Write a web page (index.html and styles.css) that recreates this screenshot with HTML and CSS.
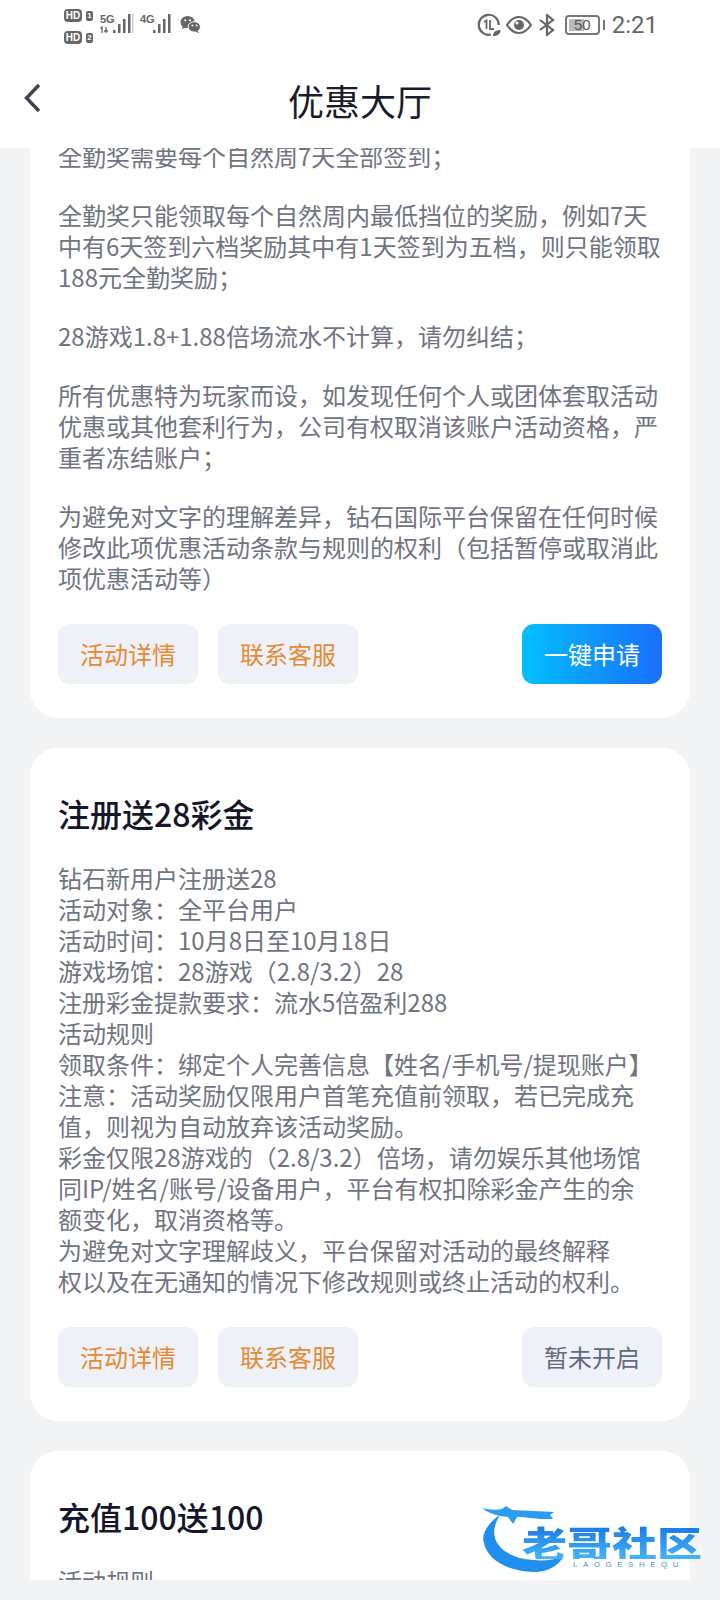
FILE: index.html
```html
<!DOCTYPE html>
<html lang="zh-CN">

<head>
    <meta charset="UTF-8">
    <meta name="viewport" content="width=device-width, initial-scale=1.0">
    <title>优惠大厅</title>
    <link rel="stylesheet" href="styles.css">
</head>

<body>
    <div id="page-wrap">
        <div class="top-bar">
            <div class="status-bar">
                <div class="status-left">
                    <div class="sim-col">
                        <div class="sim-row"><span class="hd">HD</span><span class="sim-num">1</span></div>
                        <div class="sim-row"><span class="hd">HD</span><span class="sim-num">2</span></div>
                    </div>
                    <div class="net net-5g">
                        <span class="net-label">5G</span>
                        <svg width="34" height="24" viewBox="0 0 34 24">
                            <path d="M2 23v-6L0.500 18.500M6 17v6M4 21h4" stroke="#666" stroke-width="1.300" fill="none" />
                            <rect x="13" y="20" width="2.500" height="3" fill="#666" />
                            <rect x="18" y="14" width="2.500" height="9" fill="#666" />
                            <rect x="23" y="9" width="2.500" height="14" fill="#666" />
                            <rect x="28" y="4" width="2.500" height="19" fill="#666" />
                            <rect x="32" y="4" width="1.500" height="19" fill="#ccc" />
                        </svg>
                    </div>
                    <div class="net net-4g">
                        <span class="net-label">4G</span>
                        <svg width="24" height="24" viewBox="0 0 24 24">
                            <rect x="1" y="20" width="2.500" height="3" fill="#666" />
                            <rect x="6" y="14" width="2.500" height="9" fill="#666" />
                            <rect x="11" y="9" width="2.500" height="14" fill="#666" />
                            <rect x="16" y="4" width="2.500" height="19" fill="#666" />
                        </svg>
                    </div>
                    <svg class="wechat" width="21" height="19" viewBox="0 0 22 20">
                        <ellipse cx="8" cy="7.500" rx="7.500" ry="6.500" fill="#666" />
                        <path d="M3 11l-1 4 4-2z" fill="#666" />
                        <ellipse cx="15" cy="12.500" rx="6.500" ry="5.500" fill="#666" stroke="#fff" stroke-width="1" />
                        <path d="M18 16l2 3-4-1.500z" fill="#666" />
                        <circle cx="5.500" cy="5.500" r="1.100" fill="#fff" />
                        <circle cx="10.500" cy="5.500" r="1.100" fill="#fff" />
                        <circle cx="13" cy="11" r="1" fill="#fff" />
                        <circle cx="17.500" cy="11" r="1" fill="#fff" />
                    </svg>
                </div>
                <div class="status-right">
                    <svg class="data-saver" width="24" height="24" viewBox="0 0 24 24">
                        <path d="M14 21.500A10 10 0 1 1 21.700 12" fill="none" stroke="#666" stroke-width="2.200" />
                        <path d="M7 9l2.500-1.500V16M13 7v9h4" fill="none" stroke="#666" stroke-width="1.800" />
                        <path d="M16 23c0-4 3-6 7.500-6 0 4-3 6-7.500 6z" fill="#666" />
                    </svg>
                    <svg width="26" height="20" viewBox="0 0 26 20">
                        <path d="M1 10C5 4 9 2 13 2s8 2 12 8c-4 6-8 8-12 8s-8-2-12-8z" fill="none" stroke="#666" stroke-width="2.200" />
                        <circle cx="13" cy="10" r="5" fill="#666" />
                        <circle cx="11" cy="8" r="1.500" fill="#fff" />
                    </svg>
                    <svg width="16" height="22" viewBox="0 0 16 22">
                        <path d="M1 6l13 10-6 5V1l6 5L1 16" fill="none" stroke="#666" stroke-width="2.200" />
                    </svg>
                    <div class="battery">
                        <div class="battery-box"><span class="battery-fill"></span><span class="battery-num">50</span></div>
                        <span class="battery-tip"></span>
                    </div>
                    <span class="clock">2:21</span>
                </div>
            </div>
            <div class="nav-bar">
                <svg class="back" width="20" height="30" viewBox="0 0 20 30">
                    <path d="M16 2L3.500 15 16 28" fill="none" stroke="#3f4350" stroke-width="3.400" />
                </svg>
                <h1 class="nav-title">优惠大厅</h1>
            </div>
        </div>

        <div class="list">
            <div class="card card-first">
                <div class="rules">
                    <p>全勤奖需要每个自然周7天全部签到；</p>
                    <p>全勤奖只能领取每个自然周内最低挡位的奖励，例如7天<br>中有6天签到六档奖励其中有1天签到为五档，则只能领取<br>188元全勤奖励；</p>
                    <p>28游戏1.8+1.88倍场流水不计算，请勿纠结；</p>
                    <p>所有优惠特为玩家而设，如发现任何个人或团体套取活动<br>优惠或其他套利行为，公司有权取消该账户活动资格，严<br>重者冻结账户；</p>
                    <p>为避免对文字的理解差异，钻石国际平台保留在任何时候<br>修改此项优惠活动条款与规则的权利（包括暂停或取消此<br>项优惠活动等）</p>
                </div>
                <div class="actions">
                    <a class="btn btn-plain">活动详情</a>
                    <a class="btn btn-plain">联系客服</a>
                    <a class="btn btn-apply">一键申请</a>
                </div>
            </div>

            <div class="card">
                <h2 class="card-title">注册送28彩金</h2>
                <div class="rules">
                    钻石新用户注册送28<br>
                    活动对象：全平台用户<br>
                    活动时间：10月8日至10月18日<br>
                    游戏场馆：28游戏（2.8/3.2）28<br>
                    注册彩金提款要求：流水5倍盈利288<br>
                    活动规则<br>
                    领取条件：绑定个人完善信息【姓名/手机号/提现账户】<br>
                    注意：活动奖励仅限用户首笔充值前领取，若已完成充<br>
                    值，则视为自动放弃该活动奖励。<br>
                    彩金仅限28游戏的（2.8/3.2）倍场，请勿娱乐其他场馆<br>
                    同IP/姓名/账号/设备用户，平台有权扣除彩金产生的余<br>
                    额变化，取消资格等。<br>
                    为避免对文字理解歧义，平台保留对活动的最终解释<br>
                    权以及在无通知的情况下修改规则或终止活动的权利。
                </div>
                <div class="actions">
                    <a class="btn btn-plain">活动详情</a>
                    <a class="btn btn-plain">联系客服</a>
                    <a class="btn btn-closed">暂未开启</a>
                </div>
            </div>

            <div class="card">
                <h2 class="card-title">充值100送100</h2>
                <div class="rules">活动规则</div>
            </div>
        </div>

        <div class="bottom-strip"></div>

        <div class="watermark">
            <svg class="watermark-dragon" width="100" height="72" viewBox="0 0 100 72">
                <path d="M18 12C6 20 0 30 1.500 38c3 18 22 30 50 31 14 0 24-6 30-15-10 3-20 4-30 3-16-1-28-6-35-15-6-8-6-18 1.500-30z" fill="#1f8eee" />
                <path d="M0 5c7 2 14 2 20 1l4-3 6 4c14 1 28 1 42 2l-4 3 3 4c-9 0-16 0-23-1-5-1-9-1-13-1l-4 7-5-7C15 13 6 10 0 5z" fill="#2b9bf4" />
            </svg>
            <div class="watermark-name">老哥社区</div>
            <div class="watermark-sub">LAOGESHEQU</div>
        </div>
    </div>
</body>

</html>
```

FILE: styles.css
```css
* {
    box-sizing: border-box;
}

html,
body {
    margin: 0;
    padding: 0;
}

body {
    background-color: #F2F3F5;
    font-family: "Noto Sans CJK SC", "Noto Sans", sans-serif;
}

#page-wrap {
    position: relative;
    width: 720px;
    height: 1600px;
    display: flex;
    flex-direction: column;
    overflow: hidden;
}

.top-bar {
    height: 148px;
    flex-shrink: 0;
    background-color: #fff;
    position: relative;
    z-index: 1;
}

.status-bar {
    height: 52px;
    display: flex;
    justify-content: space-between;
    padding: 6px 62px 0 64px;
}

.status-left {
    display: flex;
    align-items: flex-start;
}

.sim-col {
    display: flex;
    flex-direction: column;
    gap: 9px;
    margin-top: 3px;
}

.sim-row {
    display: flex;
    align-items: center;
    gap: 4px;
    height: 13px;
}

.hd {
    width: 18px;
    height: 13px;
    border-radius: 4px;
    background-color: #666;
    color: #fff;
    font-family: "Liberation Sans", sans-serif;
    font-size: 10px;
    font-weight: 700;
    line-height: 13px;
    text-align: center;
}

.sim-num {
    width: 7px;
    height: 10px;
    border-radius: 2px;
    background-color: #666;
    color: #fff;
    font-family: "Liberation Sans", sans-serif;
    font-size: 8px;
    font-weight: 700;
    line-height: 10px;
    text-align: center;
}

.net {
    position: relative;
    margin-left: 7px;
    margin-top: 4px;
}

.net-label {
    position: absolute;
    left: 0;
    top: 4px;
    color: #666;
    font-family: "Liberation Sans", sans-serif;
    font-size: 11px;
    font-weight: 700;
    line-height: 11px;
}

.net-4g {
    margin-left: 6px;
    padding-left: 12px;
}

.wechat {
    margin-left: 4px;
    margin-top: 9px;
}

.status-right {
    display: flex;
    align-items: center;
    gap: 7px;
    height: 38px;
    color: #666;
}

.data-saver {
    margin-right: -2px;
}

.battery {
    display: flex;
    align-items: center;
    gap: 3px;
    margin-left: 3px;
}

.battery-box {
    position: relative;
    width: 35px;
    height: 20px;
    border: 2px solid #777;
    border-radius: 4px;
    text-align: center;
}

.battery-fill {
    position: absolute;
    left: 2px;
    top: 2px;
    bottom: 2px;
    width: 15px;
    background-color: #bbb;
}

.battery-num {
    position: relative;
    display: block;
    font-family: "Liberation Sans", sans-serif;
    font-size: 15px;
    line-height: 16px;
    color: #555;
}

.battery-tip {
    width: 2px;
    height: 10px;
    background-color: #777;
}

.clock {
    font-family: "Roboto", sans-serif;
    font-size: 24px;
    color: #666;
}

.nav-bar {
    position: relative;
    height: 96px;
    display: flex;
    align-items: center;
    justify-content: center;
}

.back {
    position: absolute;
    left: 23px;
    top: 31px;
}

.nav-title {
    margin: 0;
    font-size: 36px;
    font-weight: 400;
    color: #1a1c28;
}

.list {
    flex: 1;
    min-height: 0;
    overflow: hidden;
    display: flex;
    flex-direction: column;
    gap: 30px;
    padding: 0 30px;
}

.card {
    flex-shrink: 0;
    background-color: #fff;
    border-radius: 28px;
    padding: 43px 28px 34px 28px;
}

.card-first {
    margin-top: -8px;
    padding-top: 0;
    border-radius: 0 0 28px 28px;
}

.card-title {
    margin: 0 0 27px 0;
    font-size: 32px;
    font-weight: 500;
    line-height: 44px;
    color: #14172a;
}

.rules {
    font-size: 24px;
    line-height: 31px;
    color: #70747f;
    white-space: nowrap;
}

.rules p {
    margin: 0 0 28px 0;
}

.rules p:last-child {
    margin-bottom: 0;
}

.actions {
    display: flex;
    gap: 20px;
    margin-top: 31px;
}

.btn {
    width: 140px;
    height: 60px;
    border-radius: 12px;
    font-size: 24px;
    line-height: 60px;
    text-align: center;
}

.btn-plain {
    background-color: #EEF1F7;
    color: #E68A36;
}

.btn-apply {
    margin-left: auto;
    background: linear-gradient(90deg, #02BFFE, #1A6FFB);
    color: #fff;
}

.btn-closed {
    margin-left: auto;
    background-color: #EEF1F7;
    color: #626a7e;
}

.bottom-strip {
    height: 20px;
    flex-shrink: 0;
    background-color: #F2F3F5;
    position: relative;
}

.watermark {
    position: absolute;
    left: 482px;
    top: 1503px;
    width: 222px;
    height: 70px;
    color: #1c8ff0;
}

.watermark-dragon {
    position: absolute;
    left: 0;
    top: 0;
}

.watermark-name {
    position: absolute;
    left: 40px;
    top: 22px;
    font-size: 36px;
    font-weight: 900;
    line-height: 34px;
    white-space: nowrap;
    transform: scaleX(1.25);
    transform-origin: left center;
    background: linear-gradient(180deg, #1778e6, #45b4fa);
    -webkit-background-clip: text;
    background-clip: text;
    color: transparent;
}

.watermark-sub {
    position: absolute;
    left: 91px;
    top: 57px;
    font-family: "Liberation Sans", sans-serif;
    font-size: 8px;
    line-height: 9px;
    letter-spacing: 5.500px;
    color: #4a8fd8;
    white-space: nowrap;
}
```
